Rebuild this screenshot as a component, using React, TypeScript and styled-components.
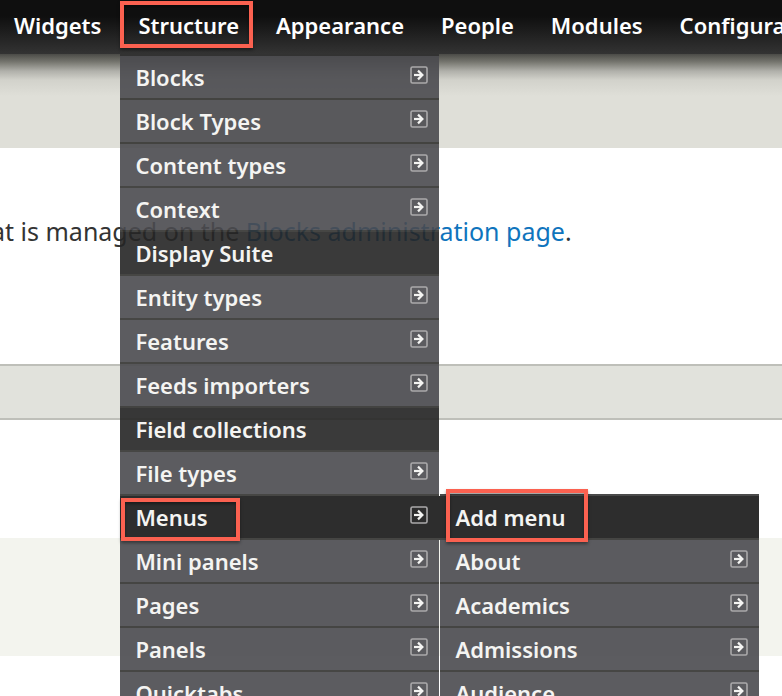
import React from 'react';
import styled, { createGlobalStyle, css } from 'styled-components';

const GlobalStyle = createGlobalStyle`
  * { box-sizing: border-box; }
  html, body { margin: 0; height: 100%; }
  body {
    overflow: hidden;
    background: #fff;
    font-family: 'Noto Sans', 'Open Sans', sans-serif;
    color: #333;
  }
  #root { height: 100%; }
`;

const Page = styled.div`
  position: relative;
  min-height: 100%;
`;

const Toolbar = styled.nav`
  position: relative;
  z-index: 2;
  height: 54px;
  background: linear-gradient(#0f0f0f 30%, #333);
`;

const TabList = styled.ul`
  display: flex;
  gap: 5px;
  margin: 0;
  padding: 0;
  list-style: none;
`;

const Tab = styled.li`
  position: relative;
  flex: none;
  height: 54px;

  &:first-child {
    margin-left: -4px;
  }
`;

const TabLink = styled.a`
  display: block;
  padding: 0 14px 0 18px;
  font-size: 22px;
  font-weight: 600;
  line-height: 50px;
  color: #fff;
  text-decoration: none;
  white-space: nowrap;
`;

const Menu = styled.ul<{ $nested?: boolean }>`
  position: absolute;
  z-index: 1;
  top: 54px;
  left: 0;
  width: 319px;
  margin: 0;
  padding: 0;
  list-style: none;
  border-top: 2px solid #323232;

  ${({ $nested }) =>
    $nested &&
    css`
      top: -2px;
      left: 320px;
      border-top-color: #4a4a4a;
    `}
`;

type Tone = 'normal' | 'dark' | 'active';

const toneColor: Record<Tone, string> = {
  normal: 'rgba(74, 74, 79, 0.9)',
  dark: 'rgba(37, 37, 37, 0.9)',
  active: '#2d2d2d',
};

const MenuItem = styled.li`
  position: relative;
`;

const MenuLink = styled.a<{ $tone: Tone; $wide?: boolean }>`
  display: flex;
  justify-content: space-between;
  align-items: flex-start;
  width: ${({ $wide }) => ($wide ? '320px' : '100%')};
  height: 44px;
  padding: 0 ${({ $wide }) => ($wide ? '12px' : '11px')} 0 15px;
  font-size: 22px;
  font-weight: 600;
  line-height: 42px;
  color: #f4f4f2;
  text-decoration: none;
  white-space: nowrap;
  background: ${({ $tone }) => toneColor[$tone]};
  background-clip: padding-box;
  border-bottom: 2px solid rgba(50, 50, 48, 0.9);

  svg {
    flex: none;
    margin-top: 10px;
  }
`;

const Highlight = styled.span<{ $target: 'tab' | 'parent' | 'child' }>`
  position: absolute;
  z-index: 3;
  border: 4px solid #fb6150;
  box-shadow: 0 2px 3px rgba(0, 0, 0, 0.4), inset 0 2px 3px rgba(0, 0, 0, 0.4);
  pointer-events: none;

  ${({ $target }) =>
    ({
      tab: css`
        inset: 1px 0 6px 0;
      `,
      parent: css`
        top: 2px;
        left: 1px;
        width: 119px;
        height: 43px;
      `,
      child: css`
        top: -7px;
        left: 6px;
        width: 142px;
        height: 53px;
      `,
    })[$target]}
`;

const Header = styled.div`
  height: 94px;
  background: linear-gradient(
    #4b4b47 0,
    #76766f 8px,
    #b0b0aa 17px,
    #d2d2cb 26px,
    #dfdfd8 42px
  );
`;

const Description = styled.p`
  height: 216px;
  margin: 0 0 0 -9px;
  padding-top: 66px;
  font-size: 25px;
  line-height: 34px;
  white-space: nowrap;

  a {
    color: #0f74bd;
    text-decoration: none;
  }
`;

const TableHead = styled.div`
  height: 56px;
  background: #e1e2dc;
  border: solid #bebfb9;
  border-width: 2px 0;
`;

const TableRow = styled.div<{ $shaded?: boolean }>`
  height: 118px;
  background: ${({ $shaded }) => ($shaded ? '#f3f4ee' : '#fff')};
`;

const ExpandIcon = () => (
  <svg width="18" height="18" viewBox="0 0 18 18" fill="none" aria-hidden="true">
    <rect x="1" y="1" width="16" height="16" rx="1.5" stroke="#aaa9aa" strokeWidth="1.6" />
    <path d="M4 9h8" stroke="#f4f4f2" strokeWidth="2.2" />
    <path d="M8 4.6l4.4 4.4-4.4 4.4" stroke="#f4f4f2" strokeWidth="2.2" />
  </svg>
);

interface Entry {
  label: string;
  tone?: Tone;
  leaf?: boolean;
  highlight?: 'parent' | 'child';
  children?: Entry[];
}

const structure: Entry[] = [
  { label: 'Blocks' },
  { label: 'Block Types' },
  { label: 'Content types' },
  { label: 'Context' },
  { label: 'Display Suite', tone: 'dark', leaf: true },
  { label: 'Entity types' },
  { label: 'Features' },
  { label: 'Feeds importers' },
  { label: 'Field collections', tone: 'dark', leaf: true },
  { label: 'File types' },
  {
    label: 'Menus',
    tone: 'active',
    highlight: 'parent',
    children: [
      { label: 'Add menu', tone: 'active', leaf: true, highlight: 'child' },
      { label: 'About' },
      { label: 'Academics' },
      { label: 'Admissions' },
      { label: 'Audience' },
    ],
  },
  { label: 'Mini panels' },
  { label: 'Pages' },
  { label: 'Panels' },
  { label: 'Quicktabs' },
];

const tabs = ['Widgets', 'Structure', 'Appearance', 'People', 'Modules', 'Configuration'];

const MenuTree = ({ entries, nested }: { entries: Entry[]; nested?: boolean }) => (
  <Menu $nested={nested}>
    {entries.map(({ label, tone = 'normal', leaf, highlight, children }) => (
      <MenuItem key={label}>
        <MenuLink href="#" $tone={tone} $wide={Boolean(children)}>
          {label}
          {!leaf && <ExpandIcon />}
        </MenuLink>
        {highlight && <Highlight $target={highlight} />}
        {children && <MenuTree entries={children} nested />}
      </MenuItem>
    ))}
  </Menu>
);

export default function App() {
  return (
    <Page>
      <GlobalStyle />
      <Toolbar aria-label="Administration">
        <TabList>
          {tabs.map((label) => (
            <Tab key={label}>
              <TabLink href="#">{label}</TabLink>
              {label === 'Structure' && (
                <>
                  <Highlight $target="tab" />
                  <MenuTree entries={structure} />
                </>
              )}
            </Tab>
          ))}
        </TabList>
      </Toolbar>
      <main>
        <Header />
        <Description>
          at is managed on the <a href="#">Blocks administration page</a>.
        </Description>
        <TableHead />
        <TableRow />
        <TableRow $shaded />
      </main>
    </Page>
  );
}
